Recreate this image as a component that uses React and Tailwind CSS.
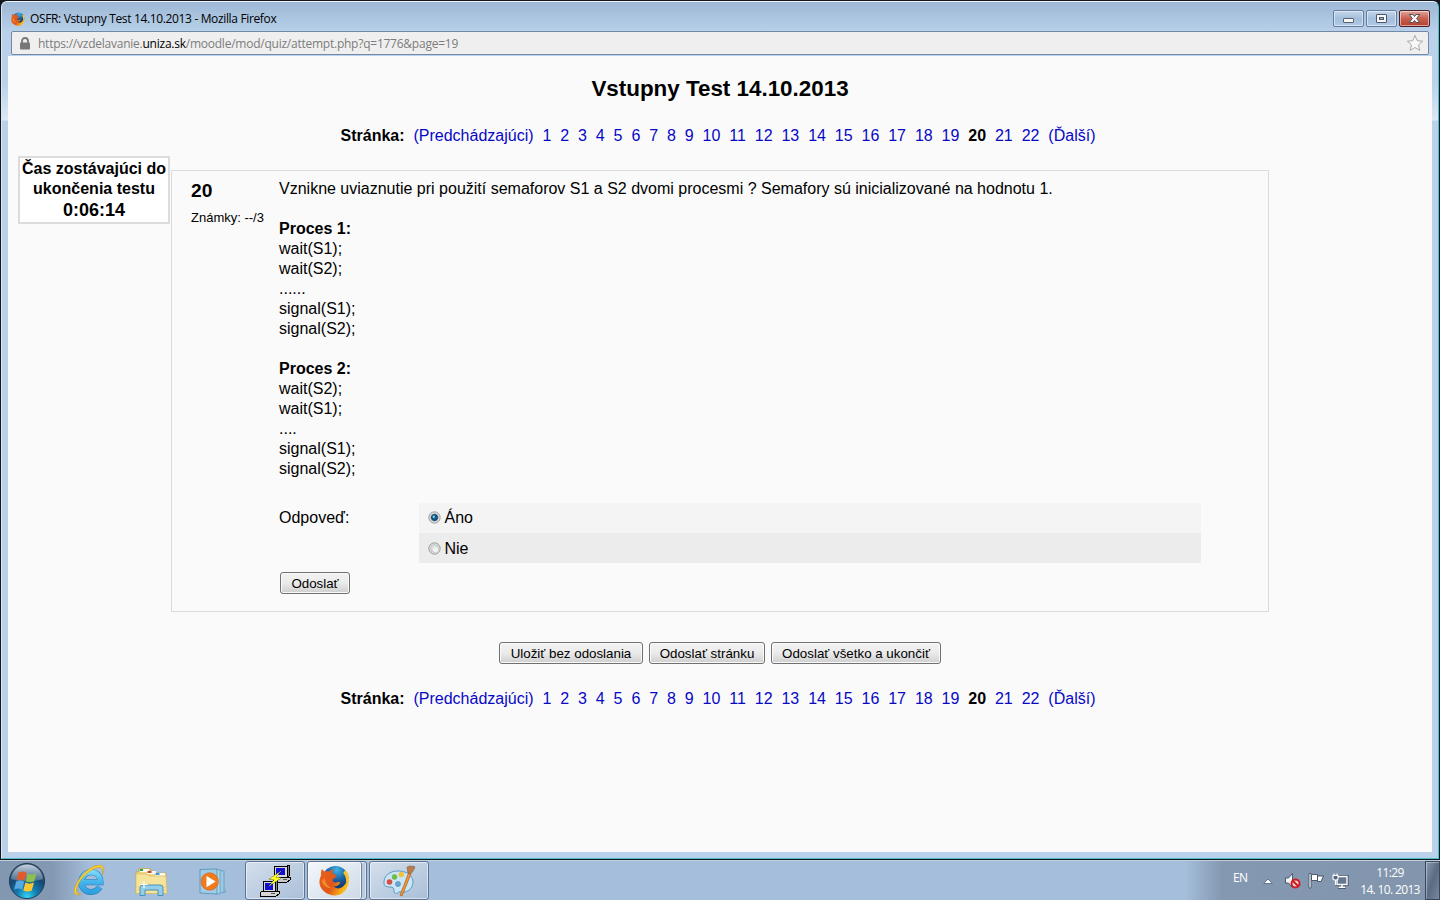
import React from "react";

const pages = Array.from({ length: 22 }, (_, i) => String(i + 1));

function FirefoxIcon({ size, id }) {
  return (
    <svg width={size} height={size} viewBox="0 0 32 32" className="shrink-0">
      <defs>
        <radialGradient id={id + "g"} cx="0.55" cy="0.15" r="0.8">
          <stop offset="0" stopColor="#3fb4e6" />
          <stop offset="0.5" stopColor="#1a5c9e" />
          <stop offset="1" stopColor="#0b2a5c" />
        </radialGradient>
        <linearGradient id={id + "f"} x1="0" y1="0" x2="1" y2="0.5">
          <stop offset="0" stopColor="#e8641c" />
          <stop offset="0.6" stopColor="#e0561a" />
          <stop offset="1" stopColor="#f9b91a" />
        </linearGradient>
      </defs>
      <circle cx="17" cy="14.5" r="13.5" fill={`url(#${id}g)`} />
      <path d="M27 5c4 4 5 10 3 16c-3 8-10 11-16 10c4 0 8-2 11-5c4-5 4-13 0-18c1-1 2-2 2-3z" fill="#f6c62b" />
      <path d="M3 4c1 1 2 2 3 3c2-1 4-1 5 0c1-1 2-3 4-3c-1 2-1 3-1 5c2 1 4 1 4 3c-1 1-3 2-4 3c0 2 1 3 3 3c2 0 3-1 5 0c-1 3-4 4-7 4c3 3 8 3 11-1c2-2 3-5 2-8c4 7 0 14-5 17c-6 3-14 1-18-3C-1 22 0 15 2 11C2 8 2 6 3 4z" fill={`url(#${id}f)`} />
      <path d="M6 13c0 5 3 9 7 11c-5 0-9-3-10-7" fill="#f4882a" />
    </svg>
  );
}

function Pager({ className }) {
  return (
    <nav className={"flex h-5 justify-center gap-[8.9px] pr-1 text-[16px] leading-5 whitespace-nowrap text-[#0808c4] " + className}>
      <b className="text-black">Stránka:</b>
      <a>(Predchádzajúci)</a>
      {pages.map((p) =>
        p === "20" ? <b key={p} className="text-black">{p}</b> : <a key={p}>{p}</a>
      )}
      <a>(Ďalší)</a>
    </nav>
  );
}

function Button({ children, className }) {
  return (
    <button className={"h-[22px] shrink-0 rounded-[3px] border border-[#707070] bg-linear-to-b from-[#f2f2f2] from-0% via-[#ebebeb] via-49% to-[#cfcfcf] pt-px text-[13.33px] leading-5 whitespace-nowrap text-black shadow-[inset_0_0_0_1px_#fafafa] " + className}>
      {children}
    </button>
  );
}

function Radio({ checked }) {
  return (
    <svg width="13" height="13" viewBox="0 0 13 13" className="shrink-0">
      <circle cx="6.5" cy="6.5" r="5.6" fill="#f4f4f4" stroke="#8e8f8f" />
      <circle cx="6.5" cy="6.5" r="4" fill={checked ? "#dfe6ea" : "#dcdddd"} stroke="#b5b9bd" strokeWidth="0.8" />
      {checked ? <circle cx="6.5" cy="6.5" r="3.1" fill="#0f5f8c" stroke="#12324f" strokeWidth="0.9" /> : <circle cx="7.5" cy="7.5" r="2.6" fill="#f1f1f1" />}
      {checked && <circle cx="5.8" cy="5.7" r="1.2" fill="#7fd0ef" />}
    </svg>
  );
}

function WindowButton({ kind }) {
  const close = kind === "close";
  return (
    <div className={"flex h-[17px] w-[31px] items-center justify-center rounded-[2px] border shadow-[inset_0_0_0_1px_rgba(255,255,255,0.5)] " + (close ? "border-[#4b1f2b] bg-linear-to-b from-[#dfa69b] from-0% via-[#c8604f] via-50% to-[#b9402f]" : "border-[#637c9f] bg-linear-to-b from-[#c3d6ea] from-0% via-[#a4bfdc] via-50% to-[#afcae6]")}>
      <svg width="15" height="13" viewBox="0 0 15 13">
        {kind === "min" && <rect x="2.5" y="6.500" width="10" height="4" rx="0.5" fill="#f8f8f2" stroke="#58606f" />}
        {kind === "max" && (
          <g stroke="#4e5668">
            <rect x="2.5" y="2.5" width="10" height="8" rx="0.5" fill="#f6f8fa" />
            <rect x="5.5" y="5.5" width="4" height="2" fill="#9bb6d4" />
          </g>
        )}
        {close && (
          <path d="M2.3 2.5h3.6l1.6 2 1.6-2h3.6L9.6 6.5l3.1 4H9.100l-1.600-2-1.600 2H2.300l3.100-4z" fill="#fafafa" stroke="#514f60" strokeWidth="1" />
        )}
      </svg>
    </div>
  );
}

function StartOrb() {
  return (
    <svg width="38" height="38" viewBox="0 0 38 38">
      <defs>
        <radialGradient id="orb" cx="0.5" cy="0.95" r="0.8">
          <stop offset="0" stopColor="#35d5f5" />
          <stop offset="0.35" stopColor="#1580b4" />
          <stop offset="0.75" stopColor="#174873" />
          <stop offset="1" stopColor="#355070" />
        </radialGradient>
        <linearGradient id="gloss" x1="0" y1="0" x2="0" y2="1">
          <stop offset="0" stopColor="#dce8f0" stopOpacity="0.85" />
          <stop offset="1" stopColor="#7d9ab4" stopOpacity="0.5" />
        </linearGradient>
      </defs>
      <circle cx="19" cy="19" r="17.6" fill="url(#orb)" stroke="#263c56" />
      <path d="M3 17C4 8 11 2.500 19 2.500S34 8 35 17C26 20 12 20 3 17z" fill="url(#gloss)" />
      <path d="M10.500 10.500c3-1.600 5.500-1.400 8 .2l-2 8c-2.500-1.600-5-1.800-8-.3z" fill="#e5592b" />
      <path d="M19.700 11.400c3 1.500 5.300 1.500 8.800-.1l-2.200 8c-3.300 1.400-5.600 1.400-8.500 0z" fill="#8fc04b" />
      <path d="M8.200 19.600c3-1.500 5.400-1.300 8 .2l-2.100 8c-2.500-1.600-5-1.600-8-.2z" fill="#58a8e2" />
      <path d="M17.400 20.500c2.900 1.500 5.400 1.500 8.600.1l-2.200 8c-3.200 1.400-5.700 1.300-8.500-.1z" fill="#fcc82f" />
    </svg>
  );
}

function ExplorerIcon() {
  return (
    <svg width="32" height="32" viewBox="0 0 32 32">
      <defs>
        <linearGradient id="ie" gradientUnits="userSpaceOnUse" x1="0" y1="4" x2="0" y2="30">
          <stop offset="0" stopColor="#8be2fb" />
          <stop offset="0.5" stopColor="#45b4ea" />
          <stop offset="1" stopColor="#2b9add" />
        </linearGradient>
      </defs>
      <path d="M9.500 17.300H26.500C26.500 11 22.500 7.300 17 7.300S7.300 11.500 7.300 17.300S11.500 27 17 27c4 0 6.800-1.700 8.800-4.800" fill="none" stroke="#2479b3" strokeWidth="6" />
      <path d="M9.500 17.300H26.500C26.500 11 22.500 7.300 17 7.300S7.300 11.500 7.300 17.300S11.500 27 17 27c4 0 6.800-1.700 8.800-4.800" fill="none" stroke="url(#ie)" strokeWidth="5" />
      <path d="M28 10C30.500 4 28 1.500 23 2.700C16 4.500 6.500 13 3.500 21c-2 5.500-1 8.500 3.200 7.800C2.500 31.500-1.500 29 .8 22.500C4 13 14.500 2 23 .3c6.500-1.200 9 3.200 5 9.700z" fill="#f8d136" stroke="#c9991b" strokeWidth="0.6" />
    </svg>
  );
}

function FolderIcon() {
  return (
    <svg width="33" height="30" viewBox="0 0 33 30">
      <path d="M1 5h3V1.500h11V4h5v2h11v20H1z" fill="#f0d77f" stroke="#c9a84e" strokeWidth="0.7" />
      <path d="M5 2h9v3H5zM12 4h9v3h-9zM20 6h10v3H20z" fill="#fbfbf4" />
      <path d="M5 2h3v2H5z" fill="#27a337" />
      <path d="M12.500 4h4v2h-4z" fill="#c9402c" />
      <path d="M20.500 6h4v2h-4z" fill="#4297dc" />
      <path d="M1 7h11l2 2h17l1 17.500H1z" fill="#f7e49c" stroke="#d6b95d" strokeWidth="0.7" />
      <path d="M2 20h29M2 23h29" stroke="#efd079" />
      <path d="M5 28.500V20.500q0-2.500 3-2.500h17q3 0 3 2.500V28.500h-5v-5.500H10v5.500z" fill="#93cfea" stroke="#4b90b8" strokeWidth="1" />
      <path d="M9 14v7M5.500 17.500h7" stroke="#fff" strokeWidth="1.2" />
    </svg>
  );
}

function MediaIcon() {
  return (
    <svg width="30" height="28" viewBox="0 0 30 28">
      <path d="M16 2l9 1v21l-9 2z" fill="#9dc9e2" stroke="#5c9cc2" strokeWidth="0.8" />
      <path d="M12 2l9-.5v24.500l-9-1z" fill="#b3d8ec" stroke="#5c9cc2" strokeWidth="0.8" />
      <path d="M1 1.500l17-.5v25L1 25z" fill="#9fcce6" stroke="#5795ba" strokeWidth="0.9" />
      <circle cx="10.700" cy="13.500" r="8.700" fill="#f07b1d" stroke="#d7631a" strokeWidth="0.7" />
      <path d="M7.500 8l9.200 5.500-9.200 5.800z" fill="#fff" />
      <path d="M25 20l2 4-3 1" fill="none" stroke="#7babca" />
    </svg>
  );
}

function PuttyIcon() {
  return (
    <svg width="32" height="32" viewBox="0 0 32 32" shapeRendering="crispEdges">
      <path d="M15 1h13v11H15z" fill="#d8d8d8" stroke="#000" />
      <path d="M28 1l2-1v11l-2 1z" fill="#848484" stroke="#000" />
      <rect x="17" y="3" width="9" height="7" fill="#1010d0" />
      <path d="M14 14l2-2h15v3l-3 2H14z" fill="#c8c8c8" stroke="#000" />
      <path d="M24 14.500h4" stroke="#555" />
      <path d="M4 16h12v11H4z" fill="#d8d8d8" stroke="#000" />
      <path d="M16 16l2-1v11l-2 1z" fill="#848484" stroke="#000" />
      <rect x="6" y="18" width="8" height="7" fill="#1010d0" />
      <path d="M1 28l2-2h17v3l-3 2H1z" fill="#d5d5d5" stroke="#000" />
      <path d="M12 28.500h4" stroke="#555" />
      <path d="M22 6l-12 8 5 1-5 6 12-8-5-1z" fill="#ffff28" stroke="#85851a" strokeWidth="0.6" />
    </svg>
  );
}

function PaintIcon() {
  return (
    <svg width="33" height="32" viewBox="0 0 33 32">
      <path d="M1 19C0 11 7 5.500 16 6c9 .4 14 5.500 14 11s-4 9-8 10c-3 1-4-1-6 0-2 2-5 2-5-1 0-3-1-4-4-4-3 0-5.500-.5-6-3z" fill="#c9e6f6" stroke="#5f9bc2" strokeWidth="1" />
      <circle cx="6.500" cy="17" r="2.800" fill="#db4d40" />
      <circle cx="11.500" cy="12" r="2.700" fill="#6fba4b" />
      <circle cx="18.300" cy="9.500" r="2.700" fill="#f2c13a" />
      <circle cx="15" cy="19" r="2.500" fill="#68a8d6" stroke="#4282b0" strokeWidth="0.600" />
      <path d="M25.500 8l2.500 1-9 22-2-.8z" fill="#e9953f" stroke="#b96a25" strokeWidth="0.8" />
      <path d="M24 2c1.500 0 2-1.500 3.500-1 2 .5 3 0 4.500 1-1 2-2 5-4.500 7l-2.500-1c-.5-2-.5-4-1-6z" fill="#b87d4d" stroke="#8a5a36" strokeWidth="0.600" />
    </svg>
  );
}

function TrayIcons() {
  return (
    <div className="flex items-center">
      <svg width="10" height="7" viewBox="0 0 10 7" className="mt-[1px]"><path d="M.8 5.500L5 1 9.200 5.500z" fill="#fff" stroke="#52647c" strokeWidth="0.8" /></svg>
      <svg width="18" height="17" viewBox="0 0 18 17" className="ml-[11px]">
        <path d="M1.500 6h3l4-4.500v14L4.500 11h-3z" fill="#f4f6f8" stroke="#3e4d60" strokeWidth="0.9" />
        <circle cx="11.500" cy="11.500" r="4" fill="#eed9d9" stroke="#cf1c22" strokeWidth="2" />
        <path d="M8.700 8.700l5.600 5.600" stroke="#cf1c22" strokeWidth="2" />
      </svg>
      <svg width="17" height="17" viewBox="0 0 17 17" className="ml-[6px]">
        <path d="M1 1.500h2v14.500H1z" fill="#fff" stroke="#3e4d60" strokeWidth="0.800" />
        <path d="M3.500 2.500h6v1.500h6l-2.500 5.500H9.500V8.500h-6z" fill="#fff" stroke="#3e4d60" strokeWidth="0.900" />
        <path d="M9.500 4v5" stroke="#46566b" />
      </svg>
      <svg width="17" height="16" viewBox="0 0 17 16" className="ml-[7px]">
        <path d="M5 3.500h10v8H5zM10 12v2M6 14.300h8" fill="none" stroke="#3c4b5e" strokeWidth="3" />
        <path d="M5 3.500h10v8H5z" fill="#657890" stroke="#fff" strokeWidth="1.400" />
        <path d="M10 12v2M6.500 14.300h7" stroke="#fff" strokeWidth="1.500" />
        <path d="M1 2.500h5v3q0 1.500-2.500 1.500T1 5.500zM2 .5v2M5 .5v2M3.500 7v5" fill="#56687f" stroke="#fff" strokeWidth="1.100" />
      </svg>
    </div>
  );
}

function Taskbar() {
  return (
    <footer className="flex h-[40px] items-center border-t border-[#c3cfdd] bg-[linear-gradient(90deg,#8297b0_0,#8398b2_52px,#a5bedb_90px,#a5bedb_1185px,#8498b1_1222px,#8295ad_100%)]">
      <div className="flex w-[245px] items-center pl-2">
        <StartOrb />
        <div className="ml-[28px]"><ExplorerIcon /></div>
        <div className="ml-[29px] pt-[2px]"><FolderIcon /></div>
        <div className="ml-[31px] pt-[2px]"><MediaIcon /></div>
      </div>
      <div className="flex h-[39px] w-[60px] items-center justify-center rounded-[3px] border border-[#5f7390] bg-linear-to-br from-[#d4dfec] to-[#a9bfd8] shadow-[inset_0_0_0_1px_rgba(255,255,255,0.5)]"><PuttyIcon /></div>
      <div className="ml-[2px] flex h-[39px] w-[60px] rounded-[3px] border border-[#5f7390] bg-[#b9cbdf] shadow-[inset_0_0_0_1px_rgba(255,255,255,0.5)]">
        <div className="flex w-[54px] items-center justify-center rounded-[3px] border-r border-[#71839c] bg-linear-to-br from-[#f5f8fb] to-[#ccd9e7] shadow-[inset_0_0_0_1px_rgba(255,255,255,0.7)]"><FirefoxIcon size={31} id="task" /></div>
      </div>
      <div className="ml-[2px] flex h-[39px] w-[60px] items-center justify-center rounded-[3px] border border-[#5f7390] bg-linear-to-br from-[#d4dfec] to-[#a9bfd8] shadow-[inset_0_0_0_1px_rgba(255,255,255,0.5)]"><PaintIcon /></div>
      <div className="ml-auto flex h-[39px] items-center font-['Open_Sans','Noto_Sans',sans-serif] text-[12px] text-white">
        <span className="mr-[14px] -mt-[6px] w-[16px] text-[12px] tracking-[-0.6px]">EN</span>
        <TrayIcons />
        <div className="ml-[10px] w-[62px] pt-px text-center leading-[17px] whitespace-nowrap">
          <div className="tracking-[-0.6px]">11:29</div>
          <div className="tracking-[-0.65px]">14. 10. 2013</div>
        </div>
        <div className="ml-[4px] h-[39px] w-[15px] border border-[#37465a] bg-linear-to-br from-[#8a9cb2] via-[#5b6c82] to-[#76899f] shadow-[inset_1px_1px_0_rgba(255,255,255,0.35)]" />
      </div>
    </footer>
  );
}

export default function App() {
  return (
    <div className="flex h-[900px] w-[1440px] flex-col overflow-hidden bg-[#14181e] font-['Liberation_Sans',Arial,sans-serif] text-[16px] leading-5 text-black">
      <div className="mt-px mb-px ml-px flex h-[858px] w-[1438px] flex-col rounded-t-[6px] border-t border-r border-b border-l border-t-[#eef5fc] border-r-[#45c6cf] border-b-[#48bfca] border-l-[#d9e8f5] bg-[linear-gradient(180deg,#9db8d5_0,#b9d1ea_30px,#b9d1ea_80px,#dbe8f5_118px,#b9d1ea_119px,#b9d1ea_100%)]">
        <header className="flex h-[29px] items-center pl-[9px]">
          <div className="mt-[4px]"><FirefoxIcon size={14} id="title" /></div>
          <h1 className="mt-[4px] ml-[5px] font-['Open_Sans','Noto_Sans',sans-serif] text-[12px] tracking-[-0.35px] whitespace-nowrap">OSFR: Vstupny Test 14.10.2013 - Mozilla Firefox</h1>
          <div className="mt-[4px] mr-[8px] ml-auto flex gap-[2px]">
            <WindowButton kind="min" />
            <WindowButton kind="max" />
            <WindowButton kind="close" />
          </div>
        </header>
        <div className="mr-[9px] ml-[9px] flex h-[24px] items-center rounded-[2px] border border-[#7289a8] bg-[#efefef] font-['Open_Sans','Noto_Sans',sans-serif] text-[12px] text-[#7c7c7c]">
          <svg width="12" height="13" viewBox="0 0 12 13" className="ml-[7px]">
            <path d="M3 6V4a3 3 0 0 1 6 0v2" fill="none" stroke="#777" strokeWidth="1.800" />
            <rect x="1" y="5.500" width="10" height="7" rx="1" fill="#777" />
          </svg>
          <span className="mt-px ml-[7px] tracking-[-0.240px] whitespace-nowrap">https://vzdelavanie.<span className="text-black">uniza.sk</span>/moodle/mod/quiz/attempt.php?q=1776&amp;page=19</span>
          <svg width="18" height="18" viewBox="0 0 18 18" className="mr-[4px] ml-auto">
            <path d="M9 1.500l2.200 5.200 5.500.5-4.200 3.700 1.300 5.500L9 13.500l-4.800 2.900 1.300-5.500L1.300 7.200l5.500-.5z" fill="#f8f8f8" stroke="#aaa" />
          </svg>
        </div>
        <main className="mt-px mr-[6px] mb-[6px] ml-[6px] flex flex-1 flex-col bg-[#fafafa]">
          <h2 className="mt-[19px] h-7 text-center text-[22.400px] leading-7 font-bold">Vstupny Test 14.10.2013</h2>
          <Pager className="mt-[23px]" />
          <div className="mt-[10px] flex items-start pl-[10px]">
            <aside className="h-[68px] w-[152px] border-2 border-[#dcdcdc] bg-white pt-px text-center font-bold whitespace-nowrap">
              <div>Čas zostávajúci do</div>
              <div>ukončenia testu</div>
              <div className="text-[18px] leading-[23px]">0:06:14</div>
            </aside>
            <section className="mt-[14px] ml-px flex h-[442px] w-[1098px] border border-[#dcdcdc]">
              <div className="w-[107px] pt-[8px] pl-[19px]">
                <div className="text-[19.200px] leading-6 font-bold">20</div>
                <div className="mt-[5px] text-[13px] leading-5 whitespace-nowrap">Známky: --/3</div>
              </div>
              <div className="flex-1 pt-[8px]">
                <p>Vznikne uviaznutie pri použití semaforov S1 a S2 dvomi procesmi ? Semafory sú inicializované na hodnotu 1.</p>
                <div className="mt-5">
                  <b>Proces 1:</b>
                  <div>wait(S1);</div>
                  <div>wait(S2);</div>
                  <div>......</div>
                  <div>signal(S1);</div>
                  <div>signal(S2);</div>
                </div>
                <div className="mt-5">
                  <b>Proces 2:</b>
                  <div>wait(S2);</div>
                  <div>wait(S1);</div>
                  <div>....</div>
                  <div>signal(S1);</div>
                  <div>signal(S2);</div>
                </div>
                <div className="mt-[24px] flex">
                  <div className="w-[140px] pt-[5px]">Odpoveď:</div>
                  <div className="w-[782px]">
                    <label className="flex h-[30px] items-start gap-[4px] bg-[#f4f4f4] pt-[8px] pl-[8.500px]"><Radio checked /><span className="-mt-[3px]">Áno</span></label>
                    <label className="flex h-[30px] items-start gap-[4px] bg-[#ececec] pt-[9px] pl-[8.500px]"><Radio /><span className="-mt-[3px]">Nie</span></label>
                  </div>
                </div>
                <Button className="mt-[9px] ml-px block w-[70px]">Odoslať</Button>
              </div>
            </section>
          </div>
          <div className="mt-[30px] flex justify-center gap-[6px]">
            <Button className="w-[144px]">Uložiť bez odoslania</Button>
            <Button className="w-[116px]">Odoslať stránku</Button>
            <Button className="w-[170px]">Odoslať všetko a ukončiť</Button>
          </div>
          <Pager className="mt-[25px]" />
        </main>
      </div>
      <Taskbar />
    </div>
  );
}
